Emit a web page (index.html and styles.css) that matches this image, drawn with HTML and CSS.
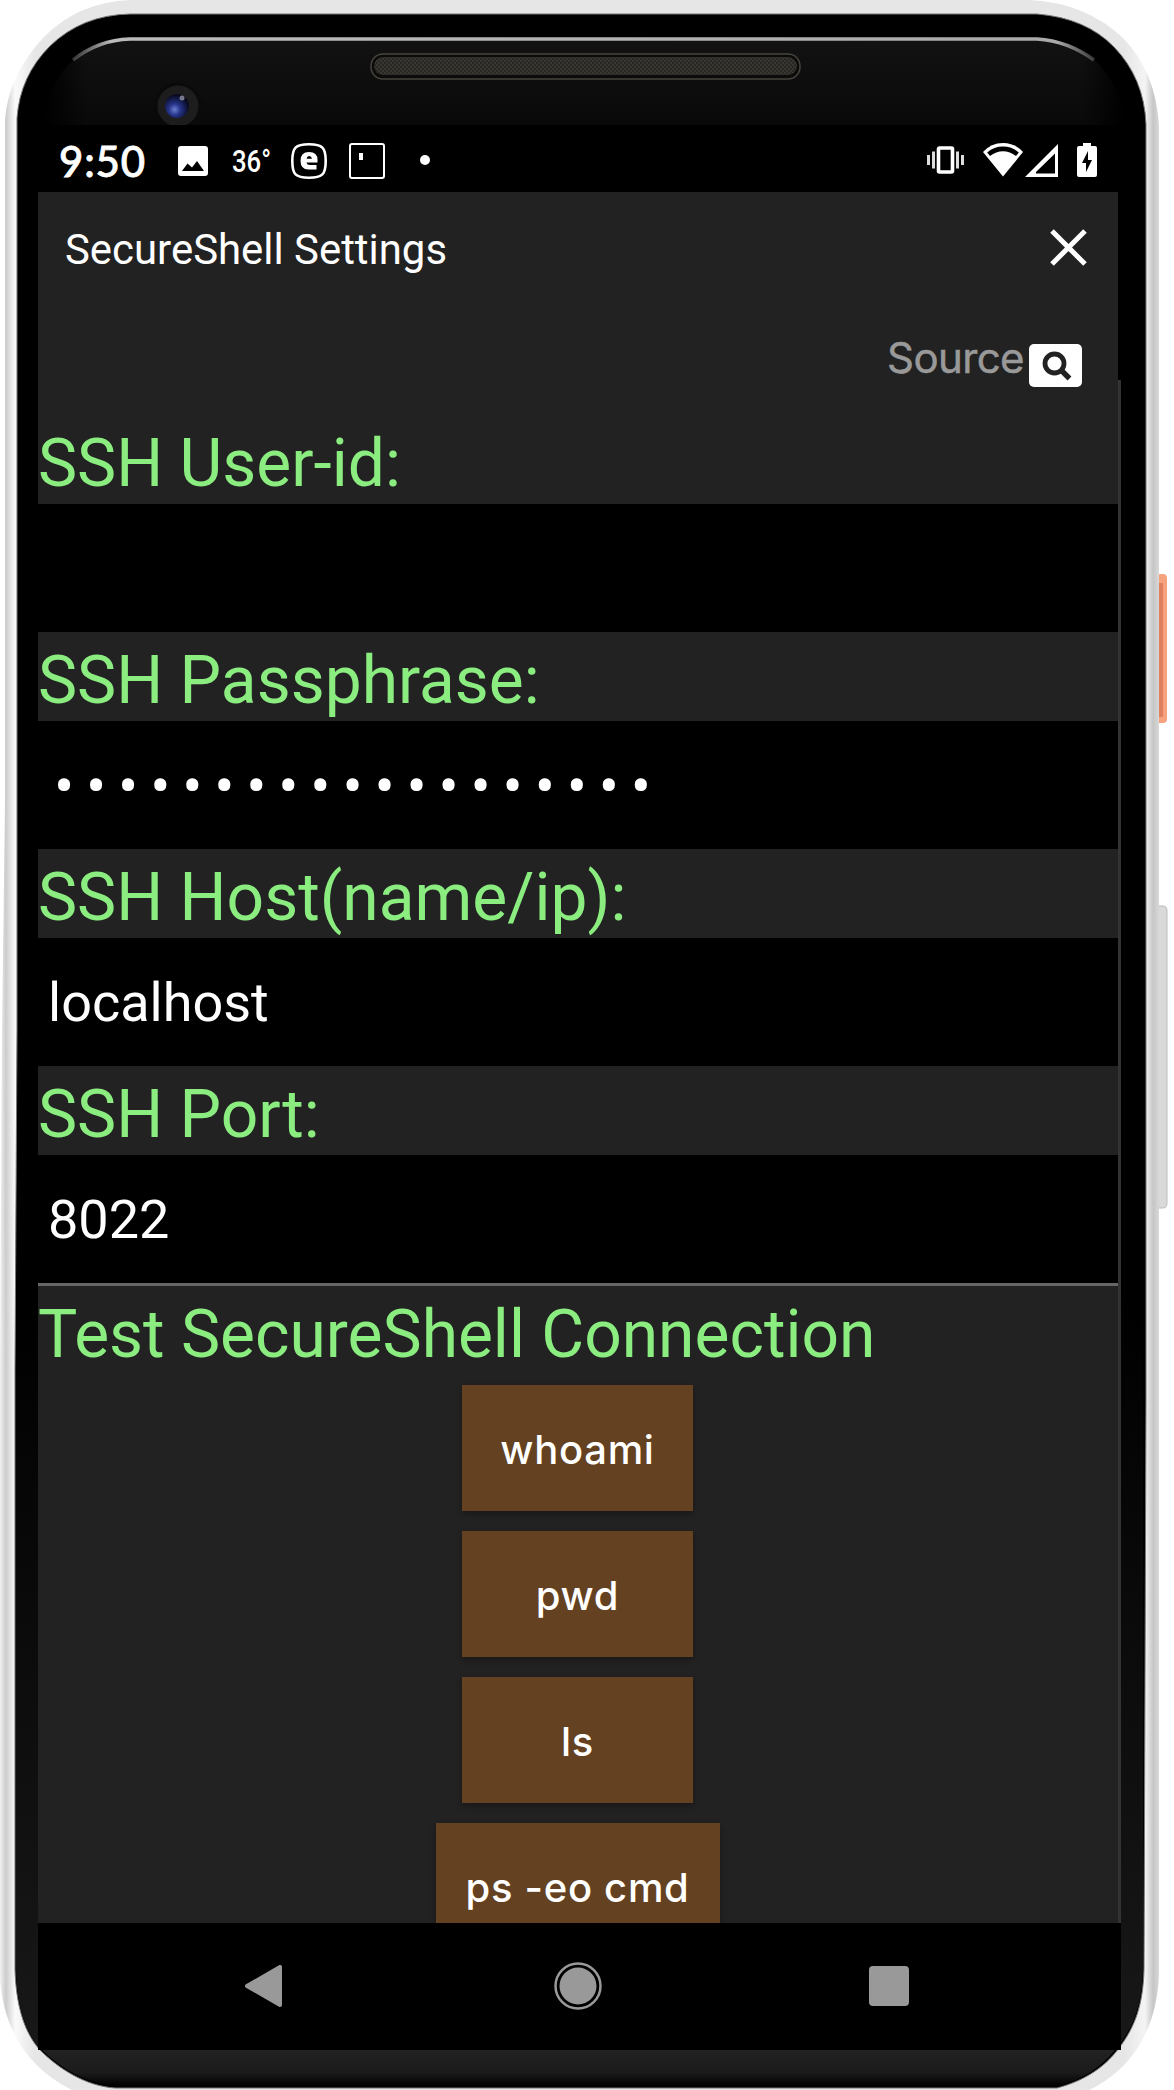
FILE: index.html
```html
<!DOCTYPE html>
<html lang="en">
<head>
<meta charset="utf-8">
<title>SecureShell Settings</title>
<link rel="stylesheet" href="styles.css">
</head>
<body>
<div class="phone">
  <svg class="phone-body" viewBox="0 0 1174 2090" aria-hidden="true">
    <defs>
      <linearGradient id="rim" x1="0" x2="1" y1="0" y2="0">
        <stop offset="0" stop-color="#f2f2f2"/><stop offset=".005" stop-color="#cccccc"/><stop offset=".013" stop-color="#fafafa"/>
        <stop offset=".03" stop-color="#e6e6e6"/><stop offset=".97" stop-color="#e6e6e6"/>
        <stop offset=".988" stop-color="#f4f4f4"/><stop offset=".995" stop-color="#c6c6c6"/><stop offset="1" stop-color="#d8d8d8"/>
      </linearGradient>
      <linearGradient id="shine" x1="70" x2="1098" y1="0" y2="0" gradientUnits="userSpaceOnUse">
        <stop offset="0" stop-color="#999" stop-opacity=".3"/><stop offset=".04" stop-color="#bbb"/>
        <stop offset=".96" stop-color="#aaa"/><stop offset="1" stop-color="#999" stop-opacity=".3"/>
      </linearGradient>
      <linearGradient id="glass" x1="0" x2="0" y1="40" y2="126" gradientUnits="userSpaceOnUse">
        <stop offset="0" stop-color="#121212"/><stop offset="1" stop-color="#090909"/>
      </linearGradient>
      <linearGradient id="glass-fade" x1="45" x2="1125" y1="0" y2="0" gradientUnits="userSpaceOnUse">
        <stop offset="0" stop-color="#000"/><stop offset=".04" stop-color="#000" stop-opacity="0"/>
        <stop offset=".96" stop-color="#000" stop-opacity="0"/><stop offset="1" stop-color="#000"/>
      </linearGradient>
      <linearGradient id="chin" x1="0" x2="0" y1="2050" y2="2088" gradientUnits="userSpaceOnUse">
        <stop offset="0" stop-color="#222"/><stop offset=".6" stop-color="#1b1b1b"/><stop offset=".95" stop-color="#000"/>
      </linearGradient>
      <linearGradient id="side" x1="0" x2="0" y1="1300" y2="2050" gradientUnits="userSpaceOnUse">
        <stop offset="0" stop-color="#000"/><stop offset="1" stop-color="#181818"/>
      </linearGradient>
      <radialGradient id="lens" cx=".4" cy=".65" r=".6">
        <stop offset="0" stop-color="#6b7fd0"/><stop offset=".4" stop-color="#26348a"/><stop offset="1" stop-color="#080a20"/>
      </radialGradient>
      <pattern id="mesh" width="4" height="4" patternUnits="userSpaceOnUse">
        <rect width="4" height="4" fill="#292723"/><path d="M0 0h2v2H0zM2 2h2v2H2z" fill="#383630"/>
      </pattern>
    </defs>
    <path d="M1157 578q0-4 4-4h2q4 0 4 4v141q0 4-4 4h-6z" fill="#f6a27f"/>
    <path d="M1159 583h4v134h-4z" fill="#e07f5f"/>
    <path d="M1157 906h6q4 0 4 5v292q0 5-4 5h-6z" fill="#d9d9d9" stroke="#bcbcbc"/>
    <path d="M130 0H1030Q1086 3 1123 38Q1156 72 1159 126V1975C1157 2025 1135 2070 1085 2092H76C28 2070 4 2030 0 1980V1369L2 1029L5 800V120Q8 76 43 38Q78 2 130 0Z" fill="url(#rim)"/>
    <path d="M130 14H1037Q1086 18 1114 47Q1144 78 1146 124V1400L1144 1970C1143 2005 1135 2027 1119 2048C1103 2070 1080 2082 1057 2088H115C85 2086 58 2068 40 2050C22 2030 16 2000 15 1970V1369L17 1029V118Q20 76 50 46Q82 15 130 14Z" fill="#000" stroke="#777" stroke-width="1"/>
    <path d="M45 125Q50 78 74 60Q97 41 130 40H1037Q1070 42 1094 60Q1118 80 1125 125Z" fill="url(#glass)"/>
    <path d="M45 125Q50 78 74 60H1094Q1118 80 1125 125Z" fill="url(#glass-fade)"/>
    <path d="M73 60Q98 40 130 39H1037Q1068 41 1094 60" fill="none" stroke="url(#shine)" stroke-width="3.500"/>
    <path d="M38 1300V2046C22 2026 17 2000 16 1970V1300ZM1121 1300V2042Q1142 2015 1143 1970V1300Z" fill="url(#side)"/>
    <path d="M42 2050H1115Q1092 2078 1057 2086H115Q75 2082 42 2050Z" fill="url(#chin)"/>
    <rect x="371" y="54" width="429" height="25" rx="12" fill="#0b0b0a" stroke="#48443f" stroke-width="1.500"/>
    <rect x="374" y="57" width="423" height="18" rx="9" fill="url(#mesh)"/>
    <circle cx="178" cy="106" r="22" fill="#1d1d1d" stroke="#0a0a0a" stroke-width="3"/>
    <circle cx="177" cy="106" r="12" fill="url(#lens)"/>
    <circle cx="182" cy="98" r="2.500" fill="#77798c"/>
  </svg>

  <div class="screen">
    <div class="status-bar">
      <span class="clock">9:50</span>
      <svg class="icon-photo" width="30" height="30" viewBox="0 0 30 30"><path fill="#fff" fill-rule="evenodd" d="M3 0h24q3 0 3 3v24q0 3-3 3H3q-3 0-3-3V3q0-3 3-3zM4 25h22L19 15 14 21.500 9.500 17.500z"/></svg>
      <span class="temp">36°</span>
      <svg class="icon-e" width="36" height="36" viewBox="0 0 36 36"><path d="M18 1.300C4.500 1.300 1.300 4.500 1.300 18S4.500 34.700 18 34.700 34.700 31.500 34.700 18 31.500 1.300 18 1.300z" fill="none" stroke="#fff" stroke-width="2.600"/><path fill="#fff" fill-rule="evenodd" d="M18 9Q26.500 9 26.500 17V19.500H15.500Q16 22 19 22H25.500V26.500H17.500Q9.500 26.500 9.500 17.800 9.500 9 18 9ZM15.500 15.800H21Q20.500 13 18.200 13 16 13 15.500 15.800Z"/></svg>
      <svg class="icon-frame" width="36" height="36" viewBox="0 0 36 36"><rect x="1" y="1" width="34" height="34" rx="2" fill="none" stroke="#fff" stroke-width="2"/><path d="M10 10h4v7h-4z" fill="#fff"/></svg>
      <span class="more-dot"></span>
      <svg class="icon-vibrate" width="38" height="28" viewBox="0 0 38 28"><path d="M0 9h3v10H0zM5 5.500h3v17H5zM29 5.500h3v17h-3zM34 9h3v10h-3z" fill="#ddd"/><rect x="11.500" y="2" width="14" height="24" rx="1" fill="none" stroke="#fff" stroke-width="3.600"/></svg>
      <svg class="icon-wifi" width="40" height="34" viewBox="0 0 40 34"><path d="M0 9Q8 0 20 0T40 9L20 33.500z" fill="#fff"/><path d="M4.200 9.500Q11 3.600 20 3.600T35.800 9.500L33 13Q27 8.300 20 8.300T7 13z" fill="#000"/></svg>
      <svg class="icon-signal" width="33" height="33" viewBox="0 0 33 33"><path fill="#fff" fill-rule="evenodd" d="M0 33 33 0V33zM11 29.500H30V9.500L11 28z"/></svg>
      <svg class="icon-battery" width="20" height="34" viewBox="0 0 20 34"><path d="M6 0h8v3h4q2 0 2 2v27q0 2-2 2H2q-2 0-2-2V5q0-2 2-2h4z" fill="#fff"/><path d="M11 8 5 20h4v9l6-12h-4z" fill="#000"/></svg>
    </div>

    <div class="app">
      <header class="title-bar">
        <h1 class="title">SecureShell Settings</h1>
        <svg class="close" width="37" height="37" viewBox="0 0 37 37"><path d="M2 2 35 35M35 2 2 35" stroke="#fff" stroke-width="5"/></svg>
      </header>
      <div class="source-row">
        <span class="source">Source</span>
        <svg class="source-icon" width="53" height="43" viewBox="0 0 53 43"><rect width="53" height="43" rx="5" fill="#fff"/><circle cx="25.500" cy="19.500" r="9.500" fill="none" stroke="#222" stroke-width="4.800"/><path d="M32 26 40.500 34.500" stroke="#222" stroke-width="5.400"/></svg>
      </div>
      <div class="label">SSH User-id:</div>
      <div class="field"></div>
      <div class="label">SSH Passphrase:</div>
      <div class="field secret">•••••••••••••••••••</div>
      <div class="label">SSH Host(name/ip):</div>
      <div class="field">localhost</div>
      <div class="label">SSH Port:</div>
      <div class="field">8022</div>
      <div class="divider"></div>
      <div class="label">Test SecureShell Connection</div>
      <div class="commands">
        <button class="command">whoami</button>
        <button class="command">pwd</button>
        <button class="command">ls</button>
        <button class="command wide">ps -eo cmd</button>
      </div>
    </div>

    <nav class="nav-bar">
      <svg width="37" height="42" viewBox="0 0 37 42"><path d="M2 21 35 2V40z" fill="#999" stroke="#999" stroke-width="4" stroke-linejoin="round"/></svg>
      <svg class="home" width="48" height="48" viewBox="0 0 48 48"><circle cx="24" cy="24" r="22.500" fill="none" stroke="#999" stroke-width="2.500"/><circle cx="24" cy="24" r="18.500" fill="#999"/></svg>
      <svg width="40" height="40" viewBox="0 0 40 40"><rect width="40" height="40" rx="4" fill="#999"/></svg>
    </nav>
    <div class="scroll-track"></div>
  </div>
</div>
</body>
</html>
```
FILE: styles.css
```css
* { box-sizing: border-box; }
body { margin: 0; background: #fff; font-family: Roboto, "Liberation Sans", sans-serif; color: #fff; }
svg { display: block; flex: none; }

.phone { position: relative; width: 1174px; height: 2090px; overflow: hidden; padding: 125px 53px 40px 38px; }
.phone-body { position: absolute; left: 0; top: 0; width: 1174px; height: 2090px; }
.screen { position: relative; width: 1083px; height: 1925px; display: flex; flex-direction: column; background: #000; }
.scroll-track { position: absolute; right: 0; top: 255px; width: 3px; height: 1543px; background: #333; }

.status-bar { height: 67px; display: flex; align-items: flex-start; padding: 18px 24px 0 21px; }
.clock { width: 88px; font: 500 42px/41px Lato, sans-serif; letter-spacing: .8px; margin-top: -2px; white-space: nowrap; -webkit-text-stroke: .8px #fff; }
.icon-photo { margin: 3px 0 0 31px; }
.temp { width: 39px; margin: 3px 0 0 24px; font: 500 31px/32px Roboto, sans-serif; transform: scaleX(.83); transform-origin: left; white-space: nowrap; }
.icon-e { margin-left: 20px; }
.icon-frame { margin-left: 22px; }
.more-dot { width: 10px; height: 10px; border-radius: 50%; background: #fff; margin: 12px 0 0 35px; }
.icon-vibrate { margin: 3px 0 0 auto; }
.icon-wifi { margin-left: 18px; }
.icon-signal { margin: 1px 0 0 2px; }
.icon-battery { margin-left: 19px; }

.app { width: 1080px; height: 1731px; background: #222; overflow: hidden; }
.title-bar { height: 112px; display: flex; align-items: center; justify-content: space-between; padding: 0 31px 0 27px; }
.title { margin: 3px 0 0; font-size: 41.900px; font-weight: 400; line-height: 50px; }
.close { margin-bottom: 1px; }
.source-row { height: 111px; display: flex; justify-content: flex-end; padding: 0 36px 0 0; }
.source { font: 400 42px/50px Inter, sans-serif; letter-spacing: -.6px; color: #999; margin: 29px 5px 0 0; -webkit-text-stroke: .5px #999; }
.source-icon { margin-top: 40px; }

.label { height: 89px; padding: 8px 0 0; font-size: 65.900px; line-height: 81px; color: #8bed80; white-space: nowrap; }
.field { height: 128px; padding: 1px 0 0 10px; background: #000; font-size: 54px; line-height: 128px; white-space: nowrap; }
.secret { padding: 2px 0 0 16px; font-size: 60px; letter-spacing: 11.800px; }
.divider { height: 3px; background: #666; }
.commands { display: flex; flex-direction: column; align-items: center; gap: 20px; padding: 10px 1px 0 0; }
.command { flex: none; width: 231px; height: 126px; border: 0; padding: 4px 0 0; background: #644120; color: #fff; font: 500 40px/50px Inter, sans-serif; letter-spacing: .7px; box-shadow: 0 3px 6px rgba(0, 0, 0, .3); }
.wide { width: 284px; }

.nav-bar { height: 127px; display: flex; justify-content: space-between; align-items: center; padding: 0 212px 2px 207px; }
.home { margin-left: 4px; }
```
